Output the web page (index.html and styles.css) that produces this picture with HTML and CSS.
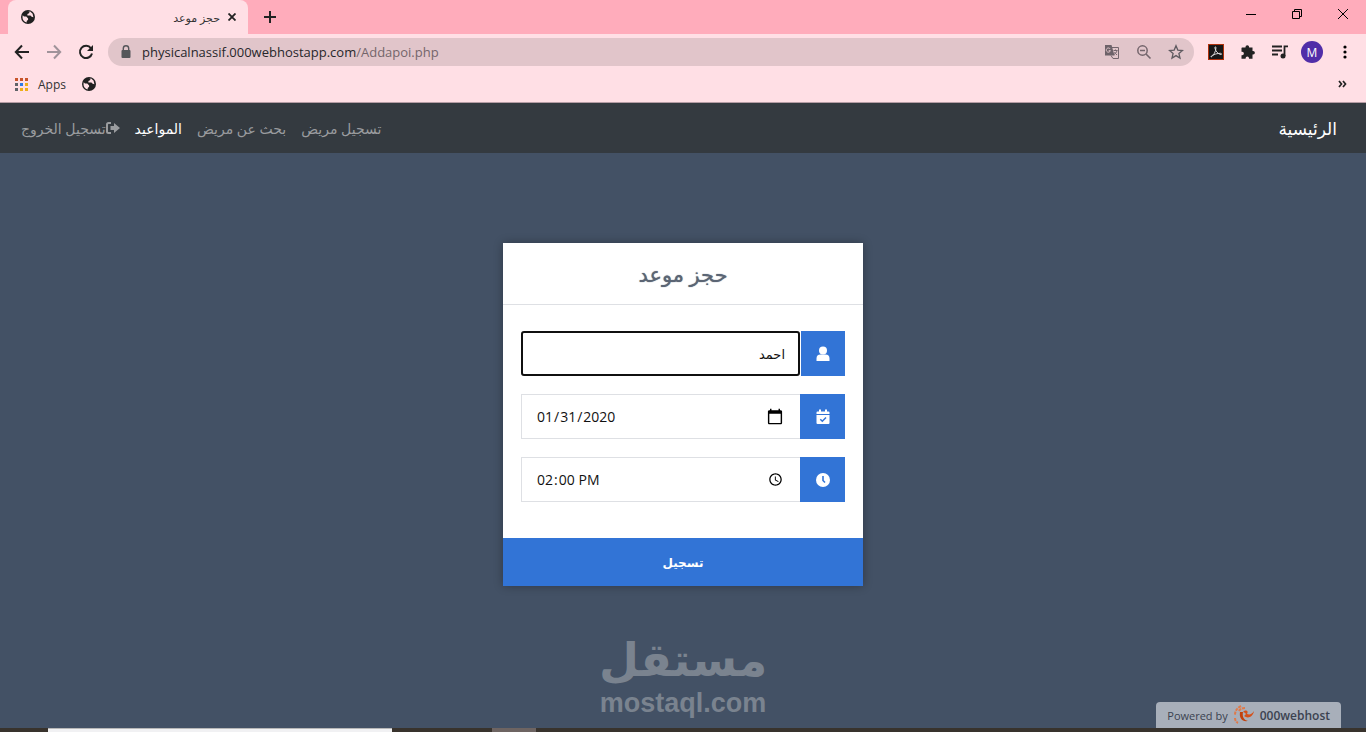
FILE: index.html
```html
<!DOCTYPE html>
<html lang="ar">
	<head>
		<meta charset="utf-8">
		<title>حجز موعد</title>
		<link rel="stylesheet" href="styles.css">
	</head>
	<body>
		<svg width="0" height="0" class="defs">
			<symbol id="globe" viewBox="0 0 14 14">
				<circle cx="7" cy="7" r="7" fill="#202020"/>
				<path d="M1.7 5.2L3 6.5h2.3l1.8 1.9v1.3L5.7 11v1.4C3 12 1.4 9.600 1.500 7zM6.400 1.600l2.200.100-.6 1.500-1.600.8v1.500h3l1.300 1.300 1.700.400-.8-3.400-2.400-2.200z" fill="#ffdfe5"/>
			</symbol>
		</svg>

		<!-- tabs -->
		<div class="tabs">
			<div class="tab">
				<svg width="14" height="14"><use href="#globe"/></svg>
				<span class="tab-title" dir="rtl">حجز موعد</span>
				<button type="button" aria-label="Close tab"><svg width="8" height="8" viewBox="0 0 8 8"><path d="M.5.5l7 7M7.500.5l-7 7" stroke="#222" stroke-width="1.800"/></svg></button>
			</div>
			<button type="button" class="new-tab" aria-label="New tab"><svg width="12" height="12" viewBox="0 0 12 12"><path d="M6 0v12M0 6h12" stroke="#222" stroke-width="2"/></svg></button>
			<div class="window-buttons">
				<button type="button" aria-label="Minimize"><svg width="10" height="10" viewBox="0 0 10 10"><path d="M0 5.500h10" stroke="#000"/></svg></button>
				<button type="button" aria-label="Restore"><svg width="10" height="10" viewBox="0 0 10 10"><path d="M.5 2.500h7v7h-7zM2.500 2.500v-2h7v7h-2" fill="none" stroke="#000"/></svg></button>
				<button type="button" aria-label="Close"><svg width="10" height="10" viewBox="0 0 10 10"><path d="M0 0l10 10M10 0L0 10" stroke="#000"/></svg></button>
			</div>
		</div>

		<!-- address bar -->
		<div class="toolbar">
			<button type="button" aria-label="Back"><svg width="16" height="16" viewBox="0 0 16 16"><path d="M8 1.500L1.800 8 8 14.500M2 8h13" fill="none" stroke="#222" stroke-width="2"/></svg></button>
			<button type="button" aria-label="Forward"><svg width="16" height="16" viewBox="0 0 16 16"><path d="M8 1.500L14.200 8 8 14.500M14 8H1" fill="none" stroke="#a0939a" stroke-width="2"/></svg></button>
			<button type="button" aria-label="Reload"><svg width="16" height="16" viewBox="0 0 16 16"><path d="M13 4.300A6.100 6.100 0 1 0 14 9.500" fill="none" stroke="#222" stroke-width="2"/><path d="M15 1v6H9z" fill="#222"/></svg></button>
			<div class="address">
				<svg width="10" height="14" viewBox="0 0 10 14"><path d="M2.300 6V3.500a2.700 2.700 0 0 1 5.400 0V6" fill="none" stroke="#55565a" stroke-width="1.400"/><rect x="0.500" y="5" width="9" height="8" rx="1" fill="#55565a"/></svg>
				<a href="#">physicalnassif.000webhostapp.com<span>/Addapoi.php</span></a>
				<button type="button" aria-label="Translate"><svg width="16" height="16" viewBox="0 0 16 16"><path d="M5 3.500h9.500v11H9l-2-3" fill="none" stroke="#74656c"/><path d="M1 1h6.500l3 10.500H1z" fill="#6d6269"/><path d="M6.200 5A2.100 2.100 0 1 0 6.400 6.700H4.700" fill="none" stroke="#e1c5ca"/><path d="M9.500 6.500h4M11.500 5.500v1M13 6.500c-.5 2-1.500 3-3 4M10.500 8c.5 1 1.500 2 2.500 3" fill="none" stroke="#74656c"/></svg></button>
				<button type="button" aria-label="Zoom"><svg width="16" height="16" viewBox="0 0 16 16"><circle cx="6.500" cy="6.500" r="4.700" fill="none" stroke="#74656c" stroke-width="1.500"/><path d="M4 6.500h5M10 10l4.500 4.500" stroke="#74656c" stroke-width="1.600"/></svg></button>
				<button type="button" aria-label="Bookmark"><svg width="16" height="16" viewBox="0 0 16 16"><path d="M8 1.800l1.800 4.300 4.700.4-3.600 3 1.100 4.600-4-2.500-4 2.500 1.100-4.600-3.600-3 4.700-.4z" fill="none" stroke="#5f5a60" stroke-width="1.300"/></svg></button>
			</div>
			<button type="button" aria-label="Acrobat"><svg width="16" height="16" viewBox="0 0 16 16"><rect x=".5" y=".5" width="15" height="15" fill="#171717" stroke="#b0300c"/><path d="M3.200 13c2-1 4.800-5.500 4.700-9.500 0-1-1.300-.8-1 .4.500 3 3 6.200 6 6.700 1 0 .8-1.300-.4-1.300-3 0-6.500 1-8.600 2.300-.9.700-1 1.400-.7 1.400z" fill="none" stroke="#e8e8e8" stroke-width=".9"/></svg></button>
			<button type="button" aria-label="Extensions"><svg width="16" height="16" viewBox="0 0 16 16"><path d="M2 3.500h3.500V3a1.800 1.800 0 0 1 3.600 0v.5h3.400V7h.6a1.800 1.800 0 0 1 0 3.600h-.6v4.200H9v-.6a1.700 1.700 0 0 0-3.400 0v.6H1.500v-3.600h.7a1.700 1.700 0 0 0 0-3.400h-.7V4z" fill="#222"/></svg></button>
			<button type="button" aria-label="Media"><svg width="16" height="16" viewBox="0 0 16 16"><path d="M0 2.500h10M0 6.500h10M0 10.500h6M12.500 12V2.300H16" fill="none" stroke="#222" stroke-width="1.800"/><circle cx="11" cy="12" r="2.500" fill="#222"/></svg></button>
			<button type="button" class="avatar">M</button>
			<button type="button" class="more" aria-label="Menu"><svg width="4" height="14" viewBox="0 0 4 14"><circle cx="2" cy="2" r="1.600"/><circle cx="2" cy="7" r="1.600"/><circle cx="2" cy="12" r="1.600"/></svg></button>
		</div>

		<!-- bookmarks -->
		<div class="bookmarks">
			<a href="#">
				<svg width="13" height="13" viewBox="0 0 13 13"><path d="M0 0h3v3H0zM5 0h3v3H5zM10 0h3v3h-3z" fill="#c8552b"/><path d="M0 5h3v3H0zM0 10h3v3H0z" fill="#5f6368"/><path d="M5 5h3v3H5z" fill="#2f7be5"/><path d="M5 10h3v3H5z M10 5h3v3h-3zM10 10h3v3h-3z" fill="#eeae18"/></svg>
				Apps
			</a>
			<a href="#" aria-label="Bookmark"><svg width="14" height="14"><use href="#globe"/></svg></a>
			<button type="button" aria-label="More bookmarks"><svg width="9" height="8" viewBox="0 0 9 8"><path d="M1 1l2.500 3L1 7M5 1l2.500 3L5 7" fill="none" stroke="#222" stroke-width="1.700"/></svg></button>
		</div>

		<!-- page -->
		<nav class="navbar" dir="rtl">
			<a class="brand" href="#">الرئيسية</a>
			<div class="links">
				<a href="#">تسجيل مريض</a>
				<a href="#">بحث عن مريض</a>
				<a href="#" class="active">المواعيد</a>
				<a href="#" class="logout"><svg width="14" height="12" viewBox="0 0 14 12"><path d="M5 1H2.500A1.500 1.500 0 0 0 1 2.500v7A1.500 1.500 0 0 0 2.500 11H5" fill="none" stroke="#9a9c9f" stroke-width="2"/><path d="M4.500 4H8V1l6 5-6 5V8H4.500z" fill="#9a9c9f"/></svg>تسجيل الخروج</a>
			</div>
		</nav>

		<main>
			<form class="card" onsubmit="return false;">
				<h1 dir="rtl">حجز موعد</h1>
				<div class="fields">
					<div class="field">
						<input type="text" id="name" class="current" value="احمد" dir="rtl">
						<label for="name" aria-label="الاسم"><svg width="14" height="16" viewBox="0 0 14 16"><circle cx="7" cy="4.500" r="4"/><path d="M.5 15v-2.500a4 4 0 0 1 4-4h5a4 4 0 0 1 4 4V15z"/></svg></label>
					</div>
					<div class="field">
						<input type="date" id="date" value="2020-01-31">
						<label for="date" aria-label="التاريخ"><svg width="14" height="16" viewBox="0 0 14 16"><path d="M.5 5V3.500q0-1 1-1H3V.5h2v2h4v-2h2v2h1.500q1 0 1 1V5z"/><path d="M.5 6h13v8q0 1-1 1h-11q-1 0-1-1z"/><path d="M4.300 10.300l2 2 3.700-3.800" fill="none" stroke="#3274d6" stroke-width="1.500"/></svg></label>
					</div>
					<div class="field">
						<input type="time" id="time" value="14:00">
						<label for="time" aria-label="الوقت"><svg width="14" height="16" viewBox="0 0 14 16"><circle cx="7" cy="8" r="7"/><path d="M7 4v4.500l2 2" fill="none" stroke="#3274d6" stroke-width="1.600"/></svg></label>
					</div>
				</div>
				<button type="submit">تسجيل</button>
			</form>
			<div class="watermark">
				<span class="wm-ar" dir="rtl">مستقل</span>
				<span class="wm-en">mostaql.com</span>
			</div>
			<a class="powered" href="#">
				Powered by
				<svg width="22" height="20" viewBox="0 0 22 20"><path d="M8 1C4 3 2 6 2 10M12 3c-3 0-5 1-6 3M2 13c0 2 1 4 3 5" fill="none" stroke="#e07a4a" stroke-width="2" stroke-dasharray="3 1"/><path d="M7 7c-1 6 2 10 8 9-4-1-6-4-5-9z" fill="#c2410c"/><path d="M10 7c3-3 6-1 4 2 3 1 5 0 7-3-1 6-6 8-10 5 2-1 3-3-1-4z" fill="#d4501a"/></svg>
				<b>000webhost</b>
			</a>
		</main>
		<div class="taskbar"><div class="task"></div><div class="task2"></div></div>
	</body>
</html>
```
FILE: styles.css
```css
* {
  box-sizing: border-box;
}

body {
  margin: 0;
  min-height: 100vh;
  display: flex;
  flex-direction: column;
  font-family: "Open Sans", "DejaVu Sans", sans-serif;
  font-size: 14px;
  background-color: #435165;
}

a {
  text-decoration: none;
  color: inherit;
}

button {
  border: 0;
  padding: 0;
  background: none;
  font-family: inherit;
  cursor: pointer;
}

svg {
  display: block;
  flex: none;
}

.defs {
  position: absolute;
}

/* Browser top */
.tabs {
  display: flex;
  height: 34px;
  padding-left: 8px;
  background-color: #ffacbb;
}

.tab {
  display: flex;
  align-items: center;
  width: 240px;
  padding: 0 12px 0 13px;
  border-radius: 8px 8px 0 0;
  background-color: #ffdfe5;
}

.tab-title {
  flex: 1;
  margin-right: 8px;
  font-size: 11px;
  color: #333;
}

.new-tab {
  padding: 0 16px;
}

.window-buttons {
  display: flex;
  align-items: center;
  height: 28px;
  margin-left: auto;
}

.window-buttons button {
  width: 46px;
  display: flex;
  justify-content: center;
}

.toolbar {
  display: flex;
  align-items: center;
  gap: 16px;
  height: 36px;
  padding: 0 19px 0 14px;
  background-color: #ffdfe5;
}

.address {
  flex: 1;
  display: flex;
  align-items: center;
  gap: 16px;
  height: 28px;
  margin-left: -2px;
  margin-right: -2px;
  padding: 0 10px 0 13px;
  border-radius: 14px;
  background-color: #e1c5ca;
}

.address a {
  flex: 1;
  margin-left: -5px;
  font-size: 13px;
  color: #27272a;
}

.address a span {
  color: #74656a;
}

.avatar {
  width: 22px;
  height: 22px;
  margin: 0 -3px;
  border-radius: 50%;
  background-color: #512da8;
  color: white;
  font-size: 12px;
}

.more {
  margin-left: 7px;
}

.bookmarks {
  display: flex;
  align-items: center;
  gap: 16px;
  height: 33px;
  padding: 0 19px 4px 15px;
  border-bottom: 1px solid #b59ca4;
  background-color: #ffdfe5;
  font-size: 12px;
  color: #333;
}

.bookmarks a {
  display: flex;
  align-items: center;
  gap: 10px;
}

.bookmarks button {
  margin-left: auto;
}

/* Navbar */
.navbar {
  display: flex;
  align-items: center;
  justify-content: space-between;
  height: 50px;
  padding: 0 29px 0 21px;
  background-color: #343a40;
  color: #9a9c9f;
}

.brand {
  font-size: 17px;
  color: white;
}

.links {
  display: flex;
  gap: 15px;
}

.links .active {
  color: white;
}

.logout {
  display: flex;
  align-items: center;
}

/* Booking form */
main {
  position: relative;
  flex: 1;
  padding-top: 90px;
}

.card {
  width: 360px;
  margin: 0 auto;
  background-color: white;
  box-shadow: 0 0 9px rgba(0, 0, 0, 0.3);
}

.card h1 {
  display: flex;
  align-items: center;
  justify-content: center;
  height: 62px;
  margin: 0;
  border-bottom: 1px solid #dee0e4;
  font-size: 21px;
  font-weight: normal;
  color: #5b6574;
  text-shadow: 0 0 1px #5b6574;
}

.fields {
  display: flex;
  flex-direction: column;
  gap: 18px;
  padding: 26px 18px 36px;
}

.field {
  display: flex;
  height: 45px;
}

.field input {
  flex: 1;
  min-width: 0;
  padding: 0 14px;
  border: 1px solid #dee0e4;
  border-right: 0;
  background-color: white;
  font-family: inherit;
  font-size: 14px;
  color: #111;
  outline: none;
}

.field input[type="date"]::-webkit-calendar-picker-indicator {
  width: 18px;
  height: 18px;
}

.field .current {
  border: 2px solid #101010;
  border-radius: 3px;
  margin-right: 1px;
  padding: 0 13px;
  font-size: 13px;
}

.field label {
  display: flex;
  align-items: center;
  justify-content: center;
  width: 45px;
  background-color: #3274d6;
  fill: white;
}

.field .current + label {
  width: 44px;
}

.card button {
  display: block;
  width: 100%;
  height: 48px;
  background-color: #3274d6;
  color: white;
  font-size: 12px;
  font-weight: bold;
}

.watermark {
  display: flex;
  flex-direction: column;
  align-items: center;
  margin-top: 42px;
  color: #7a838f;
  font-weight: bold;
}

.wm-ar {
  font-size: 46px;
  line-height: 60px;
}

.wm-en {
  font-family: "Liberation Sans", Arial, sans-serif;
  font-size: 27px;
  line-height: 30px;
}

.powered {
  position: absolute;
  right: 25px;
  bottom: 0;
  display: flex;
  align-items: center;
  gap: 5px;
  height: 26px;
  padding: 0 11px;
  border-radius: 4px 4px 0 0;
  background-color: #a8afba;
  font-size: 11px;
  color: #3b4250;
}

.powered b {
  font-size: 12px;
  font-weight: 600;
}

.taskbar {
  display: flex;
  height: 4px;
  background-color: #38332d;
}

.task {
  width: 344px;
  margin-left: 48px;
  border-top: 1px solid #b8b8b8;
  background-color: #f1f1f3;
}

.task2 {
  width: 44px;
  margin-left: 100px;
  background-color: #6d6462;
}
```
